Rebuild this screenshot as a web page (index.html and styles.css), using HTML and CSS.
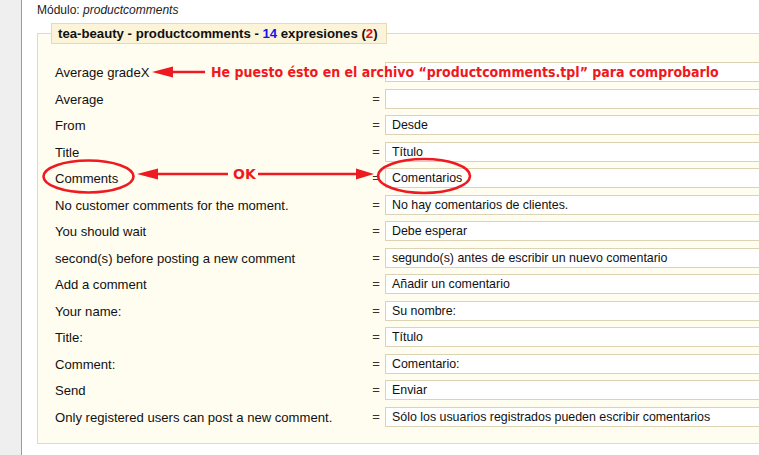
FILE: index.html
```html
<!DOCTYPE html>
<html lang="es">
<head>
<meta charset="utf-8">
<title>productcomments</title>
<link rel="stylesheet" href="styles.css">
</head>
<body>
<div class="page">
  <div class="sidebar"></div>
  <div class="main">
    <div class="module">Módulo: <em>productcomments</em></div>
    <fieldset class="box">
      <legend class="box-title">tea-beauty - productcomments - <span class="num">14</span> expresiones (<span class="err">2</span>)</legend>
      <div class="row"><div class="label">Average gradeX</div><div class="eq"></div><div class="field"></div></div>
      <div class="row"><div class="label">Average</div><div class="eq">=</div><div class="field"></div></div>
      <div class="row"><div class="label">From</div><div class="eq">=</div><div class="field">Desde</div></div>
      <div class="row"><div class="label">Title</div><div class="eq">=</div><div class="field">Título</div></div>
      <div class="row"><div class="label">Comments</div><div class="eq">=</div><div class="field">Comentarios</div></div>
      <div class="row"><div class="label">No customer comments for the moment.</div><div class="eq">=</div><div class="field">No hay comentarios de clientes.</div></div>
      <div class="row"><div class="label">You should wait</div><div class="eq">=</div><div class="field">Debe esperar</div></div>
      <div class="row"><div class="label">second(s) before posting a new comment</div><div class="eq">=</div><div class="field">segundo(s) antes de escribir un nuevo comentario</div></div>
      <div class="row"><div class="label">Add a comment</div><div class="eq">=</div><div class="field">Añadir un comentario</div></div>
      <div class="row"><div class="label">Your name:</div><div class="eq">=</div><div class="field">Su nombre:</div></div>
      <div class="row"><div class="label">Title:</div><div class="eq">=</div><div class="field">Título</div></div>
      <div class="row"><div class="label">Comment:</div><div class="eq">=</div><div class="field">Comentario:</div></div>
      <div class="row"><div class="label">Send</div><div class="eq">=</div><div class="field">Enviar</div></div>
      <div class="row"><div class="label">Only registered users can post a new comment.</div><div class="eq">=</div><div class="field">Sólo los usuarios registrados pueden escribir comentarios</div></div>
    </fieldset>
  </div>

  <svg class="marks" width="759" height="455" viewBox="0 0 759 455" aria-hidden="true">
    <line x1="171" y1="72" x2="205" y2="72" class="stroke"/>
    <polygon points="152,72 173,66.5 173,77.5" class="fill"/>
    <line x1="155" y1="174" x2="228" y2="174" class="stroke"/>
    <polygon points="137,174 158,168.5 158,179.5" class="fill"/>
    <line x1="258" y1="174" x2="358" y2="174" class="stroke"/>
    <polygon points="374,174 356,168.5 356,179.5" class="fill"/>
    <ellipse cx="88.5" cy="176.5" rx="45" ry="16" class="ring"/>
    <ellipse cx="424" cy="176" rx="46" ry="17" class="ring"/>
  </svg>
  <div class="note note-main">He puesto ésto en el archivo “productcomments.tpl” para comprobarlo</div>
  <div class="note note-ok">OK</div>
</div>
</body>
</html>
```

FILE: styles.css
```css
html, body {
  margin: 0;
  padding: 0;
  background: #ffffff;
  overflow: hidden;
}

body {
  font-family: "Liberation Sans", Arial, sans-serif;
  color: #111;
}

.page {
  position: relative;
  display: flex;
  width: 759px;
  height: 455px;
  overflow: hidden;
}

.sidebar {
  flex: 0 0 21px;
  background: #efefef;
  border-right: 1px solid #9c9c9c;
}

.main {
  flex: 0 0 auto;
  padding-left: 15px;
  padding-top: 3px;
}

.module {
  font-size: 12px;
  line-height: 15px;
  color: #222;
}

.box {
  margin: 5px 0 0 0;
  width: 760px;
  padding: 18px 0 10px 17px;
  border: 1px solid #e2d9bf;
  background: #fffdf0;
}

.box-title {
  margin-left: -4px;
  padding: 0 8px 0 6px;
  height: 19px;
  line-height: 19px;
  font-size: 13.2px;
  font-weight: bold;
  color: #111;
  background: #fcf4d9;
  border: 1px solid #e6dab6;
}

.num { color: #1212ee; }
.err { color: #e01010; }

.row {
  display: flex;
  align-items: flex-start;
  height: 26.5px;
}

.label {
  flex: 0 0 312px;
  font-size: 13.1px;
  line-height: 21px;
  color: #111;
}

.eq {
  flex: 0 0 18px;
  text-align: center;
  font-size: 13px;
  line-height: 19px;
  color: #333;
}

.field {
  flex: 0 0 440px;
  box-sizing: border-box;
  height: 20px;
  padding: 0 6px;
  font-size: 12.4px;
  line-height: 18px;
  background: #fff;
  border: 1px solid #dcd2b4;
  color: #111;
}

.marks {
  position: absolute;
  left: 0;
  top: 0;
}

.stroke {
  stroke: #ee1a22;
  stroke-width: 2.4;
}

.fill {
  fill: #ee1a22;
}

.ring {
  fill: none;
  stroke: #ee1a22;
  stroke-width: 2.6;
}

.note {
  position: absolute;
  font-family: "DejaVu Sans Condensed", "DejaVu Sans", sans-serif;
  font-weight: bold;
  color: #f01820;
  white-space: nowrap;
}

.note-main {
  left: 211px;
  top: 63px;
  font-size: 14px;
  line-height: 18px;
}

.note-ok {
  left: 233px;
  top: 165px;
  font-size: 14px;
  line-height: 18px;
  font-family: "DejaVu Sans", sans-serif;
}
```
